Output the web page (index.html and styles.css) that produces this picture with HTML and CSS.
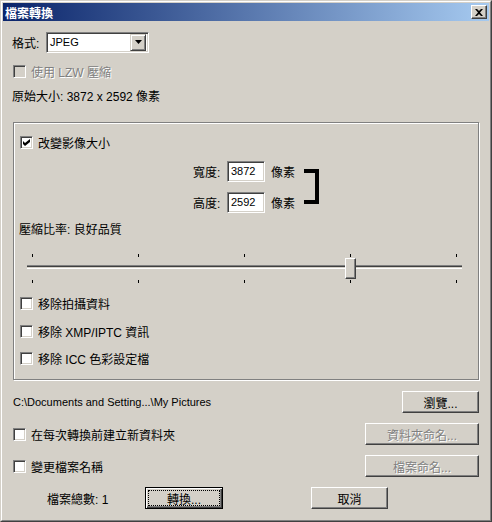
FILE: index.html
```html
<!DOCTYPE html>
<html lang="zh-Hant">
<head>
    <meta charset="UTF-8">
    <title>檔案轉換</title>
    <link rel="stylesheet" href="styles.css">
</head>
<body>
    <div class="window">
        <div class="frame">
            <div class="titlebar">
                <span class="title">檔案轉換</span>
                <span class="close">
                    <svg width="8" height="7" viewBox="0 0 8 7"><path d="M0 0h2l2 2 2-2h2L5 3.5 8 7H6L4 5 2 7H0l3-3.5z" fill="#000"/></svg>
                </span>
            </div>

            <div class="body">
                <div class="row format">
                    <span class="format-label">格式:</span>
                    <div class="select">
                        <span class="select-value">JPEG</span>
                        <span class="select-btn">
                            <svg width="7" height="4" viewBox="0 0 7 4"><path d="M0 0h7L3.5 4z" fill="#000"/></svg>
                        </span>
                    </div>
                </div>

                <label class="check disabled lzw"><span class="box"></span>使用 LZW 壓縮</label>

                <div class="info">原始大小: 3872 x 2592 像素</div>

                <div class="group">
                    <label class="check resize">
                        <span class="box">
                            <svg width="7" height="7" viewBox="0 0 7 7"><path d="M0 2l2 2 5-4v3L2 7 0 5z" fill="#000"/></svg>
                        </span>改變影像大小
                    </label>

                    <div class="dims">
                        <div class="dim-rows">
                            <div class="dim-row">
                                <span class="dim-label">寬度:</span>
                                <span class="field">3872</span>
                                <span class="unit">像素</span>
                            </div>
                            <div class="dim-row">
                                <span class="dim-label">高度:</span>
                                <span class="field">2592</span>
                                <span class="unit">像素</span>
                            </div>
                        </div>
                        <div class="bracket"></div>
                    </div>

                    <div class="quality">壓縮比率: 良好品質</div>

                    <div class="slider">
                        <div class="ticks"><i></i><i></i><i></i><i></i><i></i></div>
                        <div class="track"></div>
                        <div class="ticks"><i></i><i></i><i></i><i></i><i></i></div>
                        <span class="thumb"></span>
                    </div>

                    <label class="check opt first"><span class="box"></span>移除拍攝資料</label>
                    <label class="check opt second"><span class="box"></span>移除 XMP/IPTC 資訊</label>
                    <label class="check opt third"><span class="box"></span>移除 ICC 色彩設定檔</label>
                </div>

                <div class="row action path-row">
                    <span class="path">C:\Documents and Setting...\My Pictures</span>
                    <button class="btn browse">瀏覽...</button>
                </div>

                <div class="row action">
                    <label class="check"><span class="box"></span>在每次轉換前建立新資料夾</label>
                    <button class="btn wide" disabled>資料夾命名...</button>
                </div>

                <div class="row action">
                    <label class="check"><span class="box"></span>變更檔案名稱</label>
                    <button class="btn wide" disabled>檔案命名...</button>
                </div>

                <div class="row footer">
                    <span class="count">檔案總數: 1</span>
                    <button class="btn default"><span class="focus">轉換...</span></button>
                    <button class="btn cancel">取消</button>
                </div>
            </div>
        </div>
    </div>
</body>
</html>
```

FILE: styles.css
```css
* {
    box-sizing: border-box;
}
body {
    margin: 0;
    font-family: "Liberation Sans", "Noto Sans CJK TC", sans-serif;
    font-size: 12px;
    color: #000;
    background: #d4d0c8;
}
.window {
    width: 492px;
    height: 522px;
    background: #d4d0c8;
    border: 1px solid;
    border-color: #d4d0c8 #404040 #404040 #d4d0c8;
}
.frame {
    height: 100%;
    border: 1px solid;
    border-color: #fff #808080 #808080 #fff;
    padding: 1px;
}
.titlebar {
    height: 18px;
    display: flex;
    align-items: center;
    justify-content: space-between;
    padding: 0 2px 0 2px;
    background: linear-gradient(to right, #0a246a, #a6caf0);
}
.title {
    color: #fff;
    font-weight: bold;
    font-size: 12px;
}
.close {
    width: 16px;
    height: 14px;
    display: flex;
    align-items: center;
    justify-content: center;
    background: #d4d0c8;
    border: 1px solid;
    border-color: #fff #404040 #404040 #fff;
    box-shadow: inset -1px -1px #808080;
}

.body {
    padding: 10px 10px 0 9px;
}
.row {
    display: flex;
    align-items: center;
}
.format {
    height: 22px;
}
.format-label {
    width: 34px;
}
.select {
    width: 103px;
    height: 21px;
    display: flex;
    align-items: center;
    justify-content: space-between;
    background: #fff;
    border: 1px solid;
    border-color: #808080 #fff #fff #808080;
    box-shadow: inset 1px 1px #404040, inset -1px -1px #d4d0c8;
    padding: 2px 2px 2px 3px;
}
.select-value {
    font-size: 11px;
}
.select-btn {
    width: 16px;
    height: 17px;
    display: flex;
    align-items: center;
    justify-content: center;
    background: #d4d0c8;
    border: 1px solid;
    border-color: #d4d0c8 #404040 #404040 #d4d0c8;
    box-shadow: inset 1px 1px #fff, inset -1px -1px #808080;
}

/* checkboxes */
.check {
    display: flex;
    align-items: center;
    height: 13px;
    white-space: nowrap;
}
.box {
    width: 13px;
    height: 13px;
    margin: 0 5px 0 1px;
    display: flex;
    align-items: center;
    justify-content: center;
    background: #fff;
    border: 1px solid;
    border-color: #808080 #fff #fff #808080;
    box-shadow: inset 1px 1px #404040, inset -1px -1px #d4d0c8;
}
.check.disabled {
    color: #808080;
    text-shadow: 1px 1px #fff;
}
.check.disabled .box {
    background: #d4d0c8;
}
.lzw {
    margin-top: 12px;
}
.info {
    margin-top: 12px;
    height: 14px;
    line-height: 14px;
}

/* group box */
.group {
    margin: 18px 0 0 1px;
    height: 258px;
    border: 1px solid #808080;
    box-shadow: inset 1px 1px #fff, 1px 1px #fff;
    padding: 13px 0 0 5px;
    display: flex;
    flex-direction: column;
}
.dims {
    display: flex;
    margin: 12px 0 0 174px;
}
.dim-rows {
    display: flex;
    flex-direction: column;
    gap: 10px;
}
.dim-row {
    display: flex;
    align-items: center;
    height: 21px;
}
.dim-label {
    width: 34px;
}
.field {
    width: 38px;
    height: 21px;
    padding: 3px 0 0 3px;
    font-size: 11px;
    background: #fff;
    border: 1px solid;
    border-color: #808080 #fff #fff #808080;
    box-shadow: inset 1px 1px #404040, inset -1px -1px #d4d0c8;
}
.unit {
    margin-left: 6px;
}
.bracket {
    width: 15px;
    height: 35px;
    margin: 8px 0 0 9px;
    border: 4px solid #000;
    border-left: none;
}
.quality {
    margin-top: 10px;
    height: 14px;
    line-height: 14px;
}

/* slider */
.slider {
    position: relative;
    width: 435px;
    margin: 17px 0 0 8px;
}
.ticks {
    display: flex;
    justify-content: space-between;
    padding: 0 5px;
    height: 3px;
}
.ticks i {
    width: 1px;
    height: 3px;
    background: #000;
}
.track {
    margin: 8px 0 11px;
    height: 4px;
    border-top: 1px solid #808080;
    border-bottom: 1px solid #fff;
    background: #404040;
    box-shadow: inset 0 -1px #d4d0c8;
}
.thumb {
    position: absolute;
    left: 318px;
    top: 4px;
    width: 11px;
    height: 21px;
    background: #d4d0c8;
    border: 1px solid;
    border-color: #fff #404040 #404040 #fff;
    box-shadow: inset -1px -1px #808080;
}
.opt.first {
    margin-top: 14px;
}
.opt.second {
    margin-top: 15px;
}
.opt.third {
    margin-top: 14px;
}

/* lower rows */
.action {
    height: 22px;
    justify-content: space-between;
    margin-top: 10px;
}
.path-row {
    margin-top: 11px;
}
.path {
    font-size: 11px;
    padding-left: 1px;
}
.btn {
    height: 22px;
    padding: 0;
    font: inherit;
    color: #000;
    background: #d4d0c8;
    border: 1px solid;
    border-color: #fff #404040 #404040 #fff;
    box-shadow: inset -1px -1px #808080;
}
.btn:disabled {
    color: #808080;
    text-shadow: 1px 1px #fff;
}
.browse {
    width: 77px;
}
.wide {
    width: 114px;
}
.footer {
    height: 22px;
    margin-top: 10px;
}
.count {
    width: 133px;
    padding-left: 35px;
}
.default {
    width: 78px;
    border: 1px solid #000;
    box-shadow: inset 1px 1px #fff, inset -1px -1px #404040, inset -2px -2px #808080;
    display: flex;
    align-items: center;
    justify-content: center;
    padding: 3px;
}
.focus {
    flex: 1;
    height: 100%;
    display: flex;
    align-items: center;
    justify-content: center;
    outline: 1px dotted #000;
}
.cancel {
    width: 77px;
    margin-left: 88px;
}
```
